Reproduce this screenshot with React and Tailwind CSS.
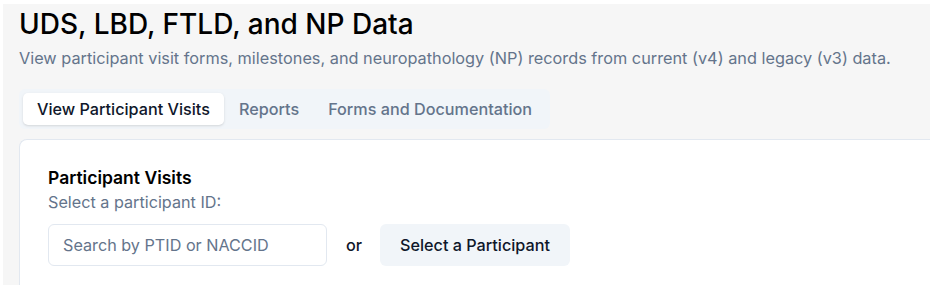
const tabs = ['View Participant Visits', 'Reports', 'Forms and Documentation'];

const App = () => {
  return (
    <div
      className="h-[293px] overflow-hidden bg-white pl-[3px] pt-[4px]"
      style={{ fontFamily: 'Inter, "Noto Sans", sans-serif' }}
    >
      <div className="h-[281px] overflow-hidden bg-[#f6f6f6] pl-4">
        <h1 className="pt-[2px] text-[28px] leading-[36px] font-medium text-black">
          UDS, LBD, FTLD, and NP Data
        </h1>
        <p className="mt-[5px] text-[16.3px] leading-[22px] text-[#64748b]">
          View participant visit forms, milestones, and neuropathology (NP) records from current (v4) and legacy (v3) data.
        </p>
        <div className="mt-[20px] inline-flex h-[40px] items-center gap-[1px] rounded-md bg-[#f1f5f9] p-[4px]">
          {tabs.map((tab, i) => (
            <button
              key={tab}
              type="button"
              className={
                i === 0
                  ? 'h-[32px] rounded-[5px] bg-white px-[14px] text-[16.2px] font-medium text-[#0f172a] shadow-sm'
                  : 'h-[32px] rounded-[5px] px-[14px] text-[16.2px] font-medium text-[#64748b]'
              }
            >
              {tab}
            </button>
          ))}
        </div>
        <div className="mt-[10px] rounded-tl-lg border border-r-0 border-[#e2e8f0] bg-white pl-[28px] pt-[26px] pb-10">
          <h2 className="text-[17.5px] leading-[24px] font-semibold text-black">Participant Visits</h2>
          <p className="mt-[2px] text-[16.2px] leading-[20px] text-[#64748b]">Select a participant ID:</p>
          <div className="mt-[12px] flex items-center">
            <input
              type="text"
              placeholder="Search by PTID or NACCID"
              className="h-[42px] w-[279px] rounded-md border border-[#e2e8f0] bg-white px-[14px] text-[16.2px] placeholder:text-[#64748b] focus:outline-none"
            />
            <span className="ml-[19px] text-[16.2px] font-medium text-[#0f172a]">or</span>
            <button
              type="button"
              className="ml-[18px] h-[42px] rounded-md bg-[#f1f5f9] px-[20px] text-[16.2px] font-medium text-[#0f172a]"
            >
              Select a Participant
            </button>
          </div>
        </div>
      </div>
    </div>
  );
};

export default App;
